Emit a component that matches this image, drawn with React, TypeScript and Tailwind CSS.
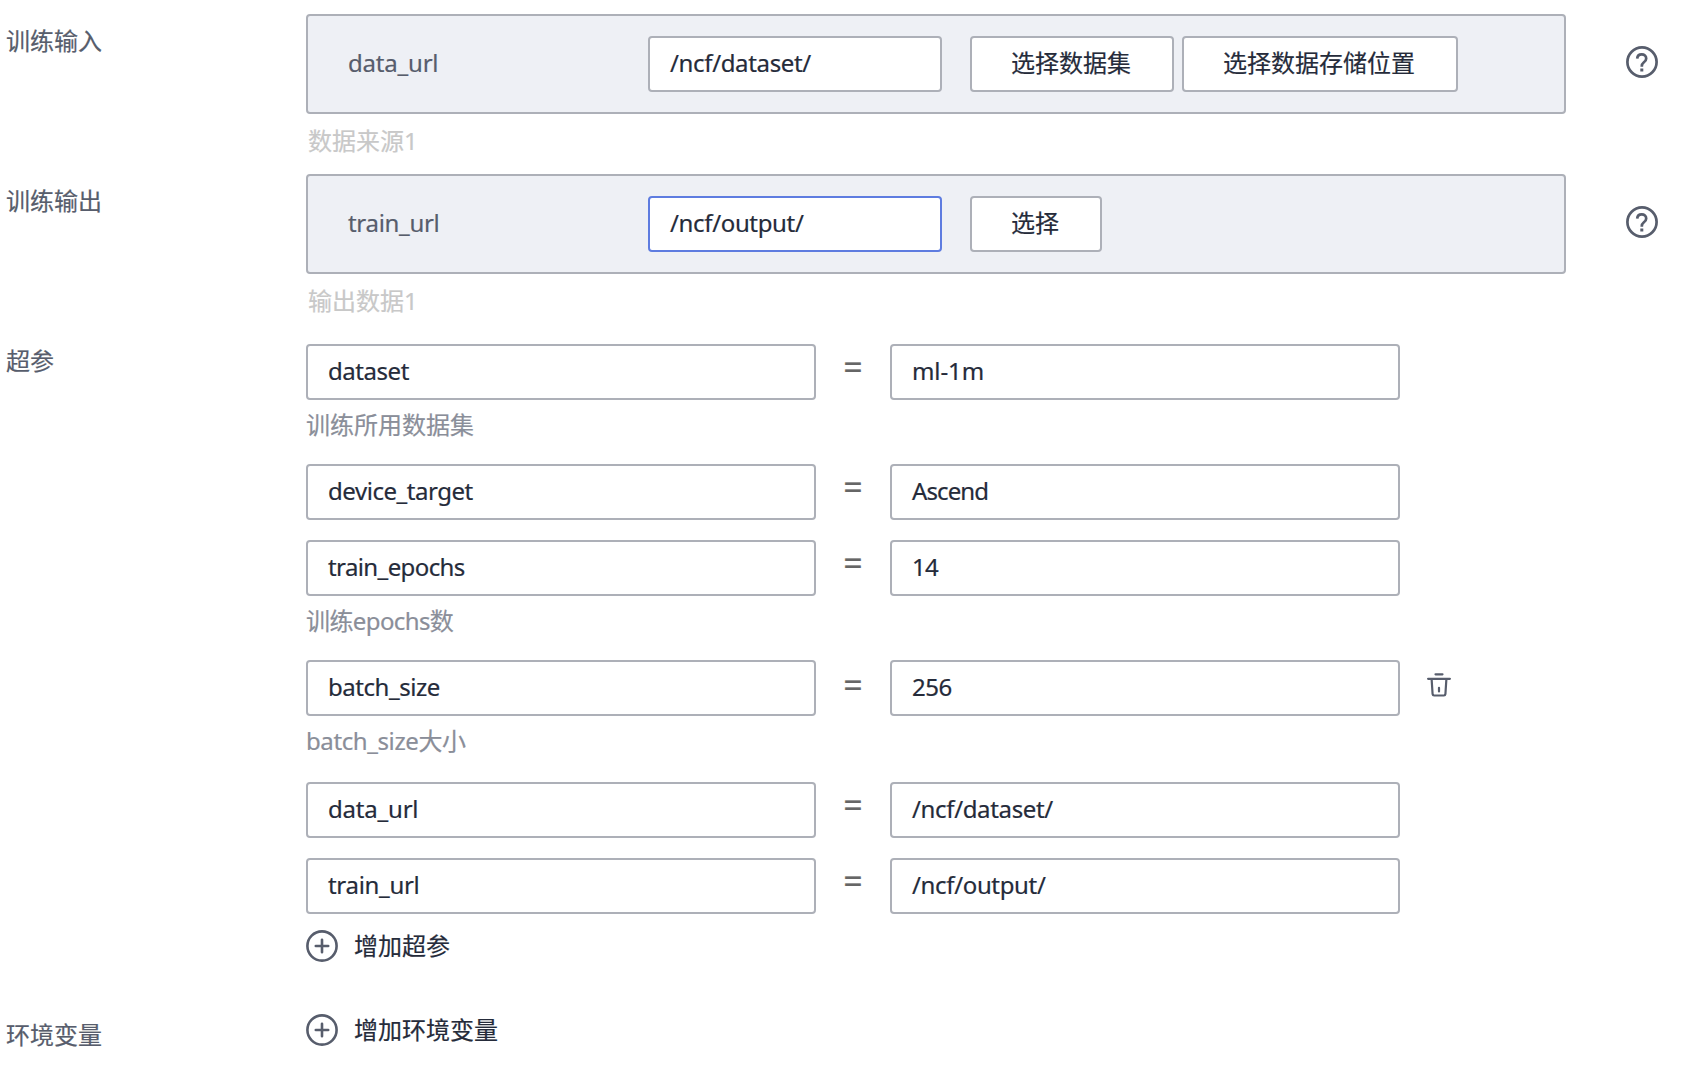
import React from "react";

type ParamRow = {
  name: string;
  value: string;
  nameTracking?: string;
  valueTracking?: string;
  hint?: string;
  hintTracking?: string;
  rowHeight: string;
  equalsOffset?: string;
  removable?: boolean;
};

const params: ParamRow[] = [
  { name: "dataset", value: "ml-1m", nameTracking: "tracking-[-0.45px]", valueTracking: "tracking-[-0.1px]", hint: "训练所用数据集", rowHeight: "h-[120px]" },
  { name: "device_target", value: "Ascend", nameTracking: "tracking-[-0.45px]", valueTracking: "tracking-[-0.9px]", rowHeight: "h-[76px]" },
  { name: "train_epochs", value: "14", nameTracking: "tracking-[-0.6px]", valueTracking: "tracking-[-0.8px]", hint: "训练epochs数", hintTracking: "tracking-[-0.6px]", rowHeight: "h-[120px]" },
  { name: "batch_size", value: "256", nameTracking: "tracking-[-0.45px]", valueTracking: "tracking-[-0.5px]", hint: "batch_size大小", hintTracking: "tracking-[-0.4px]", rowHeight: "h-[122px]", equalsOffset: "pt-[2px]", removable: true },
  { name: "data_url", value: "/ncf/dataset/", nameTracking: "tracking-[-0.2px]", valueTracking: "tracking-[-0.35px]", rowHeight: "h-[76px]" },
  { name: "train_url", value: "/ncf/output/", nameTracking: "tracking-[-0.3px]", valueTracking: "tracking-[-0.35px]", rowHeight: "h-[56px]" },
];

function HelpIcon() {
  return (
    <svg className="size-8 shrink-0" viewBox="0 0 32 32" fill="none" stroke="#575d6c" strokeWidth="2.700">
      <circle cx="16" cy="16" r="14.600" />
      <path d="M11.200 12.600c.2-2.700 2-4.200 4.500-4.200 2.600 0 4.500 1.600 4.500 4 0 1.800-.9 2.800-2.300 3.900-1.500 1.200-2.100 2-2.100 3.900v.6" />
      <path d="M15.800 22.500v3" strokeWidth="3" />
    </svg>
  );
}

function PlusIcon() {
  return (
    <svg className="size-8 shrink-0" viewBox="0 0 32 32" fill="none" stroke="#575d6c" strokeWidth="2.600">
      <circle cx="16" cy="16" r="14.600" />
      <path d="M16 9.800v12.400M9.800 16h12.400" strokeLinecap="round" />
    </svg>
  );
}

function TrashIcon() {
  return (
    <svg className="h-6 w-6 shrink-0" viewBox="0 0 24 24" fill="none" stroke="#575d6c" strokeWidth="2.200" strokeLinecap="round" strokeLinejoin="round">
      <path d="M8.500 1.300h7M1.100 5.800h21.800M4.600 5.800l1 15.400a1.500 1.500 0 0 0 1.500 1.300h9.800a1.500 1.500 0 0 0 1.500-1.300l1-15.400M12 14.800v3.600" />
    </svg>
  );
}

function Field({ text, width, tracking = "", focused = false }: { text: string; width: string; tracking?: string; focused?: boolean }) {
  return (
    <div className={`flex h-14 shrink-0 items-center rounded-[4px] border-2 bg-white pb-0.5 pl-5 text-[#252b3a] ${width} ${focused ? "border-[#5e7ce0]" : "border-[#adb0b8]"}`}>
      <span className={tracking}>{text}</span>
    </div>
  );
}

function PickButton({ text, width }: { text: string; width: string }) {
  return (
    <button className={`flex h-14 shrink-0 items-center rounded-[4px] border-2 border-[#adb0b8] bg-white pb-0.5 pl-[39px] text-[#252b3a] ${width}`}>
      {text}
    </button>
  );
}

type SourcePanelProps = {
  name: string;
  nameTracking: string;
  path: string;
  focused?: boolean;
  hint: string;
  children: React.ReactNode;
};

function SourcePanel({ name, nameTracking, path, focused, hint, children }: SourcePanelProps) {
  return (
    <div className="h-40 flex-1">
      <div className="flex items-start">
        <div className="flex h-[100px] w-[1260px] items-start rounded-[4px] border-2 border-[#adb0b8] bg-[#eef0f5] pt-5 pl-10">
          <div className={`flex h-14 w-[300px] items-center pb-0.5 ${nameTracking}`}>{name}</div>
          <Field text={path} width="w-[294px]" tracking="tracking-[-0.35px]" focused={focused} />
          <div className="ml-7 flex gap-2">{children}</div>
        </div>
        <div className="mt-8 ml-[60px]">
          <HelpIcon />
        </div>
      </div>
      <div className="mt-[9px] pl-0.5 leading-9 text-[#c8c8c8]">{hint}</div>
    </div>
  );
}

function AddButton({ text }: { text: string }) {
  return (
    <button className="flex h-8 items-center gap-4 text-[#252b3a]">
      <PlusIcon />
      {text}
    </button>
  );
}

export default function App() {
  return (
    <main className="min-h-[1068px] w-[1684px] bg-white pt-[14px] pl-1.5 font-['Noto_Sans','Noto_Sans_CJK_SC',sans-serif] text-2xl leading-9 text-[#575d6c] [-webkit-text-stroke:0.2px]">
      <section className="flex">
        <div className="w-[300px] pt-[9px]">训练输入</div>
        <SourcePanel name="data_url" nameTracking="tracking-[-0.2px]" path="/ncf/dataset/" hint="数据来源1">
          <PickButton text="选择数据集" width="w-[204px]" />
          <PickButton text="选择数据存储位置" width="w-[276px]" />
        </SourcePanel>
      </section>
      <section className="flex">
        <div className="w-[300px] pt-[9px]">训练输出</div>
        <SourcePanel name="train_url" nameTracking="tracking-[-0.3px]" path="/ncf/output/" focused hint="输出数据1">
          <PickButton text="选择" width="w-[132px]" />
        </SourcePanel>
      </section>
      <section className="flex">
        <div className="w-[300px] pt-[9px]">超参</div>
        <div className="flex-1 pt-2.5">
          {params.map((p) => (
            <div key={p.name} className={p.rowHeight}>
              <div className="flex">
                <Field text={p.name} width="w-[510px]" tracking={p.nameTracking} />
                <div className={`w-[74px] text-center text-[34px] leading-[46px] text-[#666666] ${p.equalsOffset ?? ""}`}>=</div>
                <Field text={p.value} width="w-[510px]" tracking={p.valueTracking} />
                {p.removable && (
                  <button className="mt-[13px] ml-[27px] h-6">
                    <TrashIcon />
                  </button>
                )}
              </div>
              {p.hint && <div className={`mt-[7px] leading-9 text-[#8a8e99] ${p.hintTracking ?? ""}`}>{p.hint}</div>}
            </div>
          ))}
          <div className="mt-4">
            <AddButton text="增加超参" />
          </div>
        </div>
      </section>
      <section className="mt-[52px] flex">
        <div className="w-[300px] pt-[3px]">环境变量</div>
        <AddButton text="增加环境变量" />
      </section>
    </main>
  );
}
